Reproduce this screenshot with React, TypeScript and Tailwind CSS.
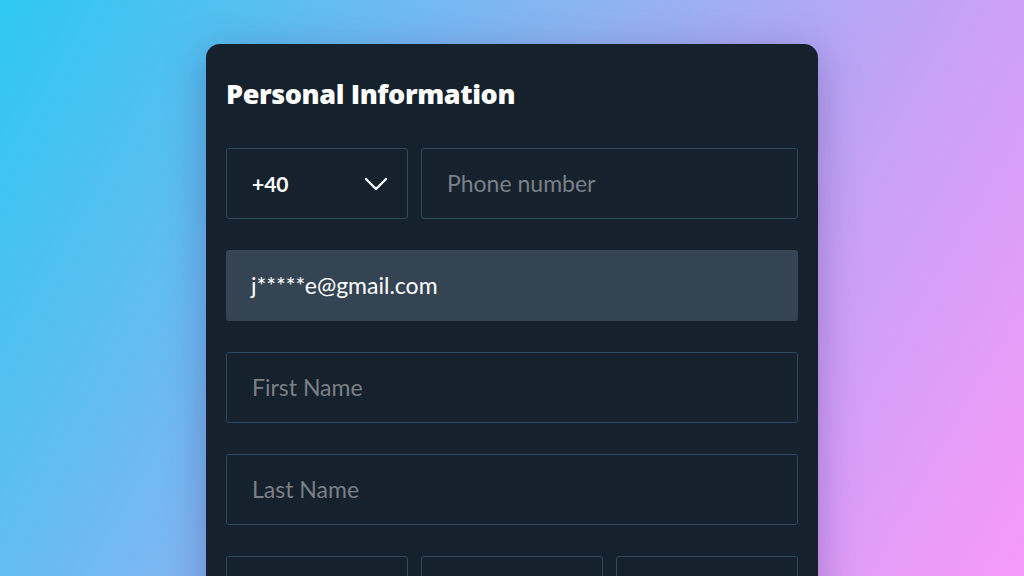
import React from 'react';

const font = { fontFamily: 'Lato, "Open Sans", sans-serif' };

const Field = ({ placeholder, className = '' }: { placeholder?: string; className?: string }) => (
  <div
    className={`h-[71px] flex items-center px-[25px] border border-[#2d4a63] rounded-[3px] text-[23px] text-[#7b8087] ${className}`}
  >
    {placeholder}
  </div>
);

export default function App() {
  return (
    <div
      className="w-[1024px] h-[576px] overflow-hidden bg-[linear-gradient(120deg,#2ec8f1_0%,#8fb3f2_45%,#c4a2f6_70%,#f79af9_100%)] flex justify-center"
      style={font}
    >
      <div className="mt-[44px] w-[612px] h-[600px] bg-[#15212d] rounded-[14px] px-[20px] pt-[36px] shadow-[0_10px_40px_rgba(60,40,120,0.35)]">
        <h1
          className="text-[27px] font-extrabold text-white leading-none tracking-[-0.4px]"
          style={{ fontFamily: '"Open Sans", Lato, sans-serif' }}
        >
          Personal Information
        </h1>
        <div className="mt-[41px] flex flex-col gap-[31px]">
          <div className="flex gap-[13px]">
            <div className="w-[182px] h-[71px] flex items-center justify-between pl-[25px] pr-[19px] border border-[#2d4a63] rounded-[3px]">
              <span className="text-[21px] font-bold text-white">+40</span>
              <svg width="24" height="14" viewBox="0 0 24 14" fill="none">
                <path d="M2 2l10 10L22 2" stroke="white" strokeWidth="2.4" strokeLinecap="round" strokeLinejoin="round" />
              </svg>
            </div>
            <Field placeholder="Phone number" className="flex-1" />
          </div>
          <div className="h-[71px] flex items-center px-[25px] bg-[#354453] rounded-[3px] text-[23px] text-white">
            j*****e@gmail.com
          </div>
          <Field placeholder="First Name" />
          <Field placeholder="Last Name" />
          <div className="flex gap-[13px]">
            <Field className="flex-1" />
            <Field className="flex-1" />
            <Field className="flex-1" />
          </div>
        </div>
      </div>
    </div>
  );
}
